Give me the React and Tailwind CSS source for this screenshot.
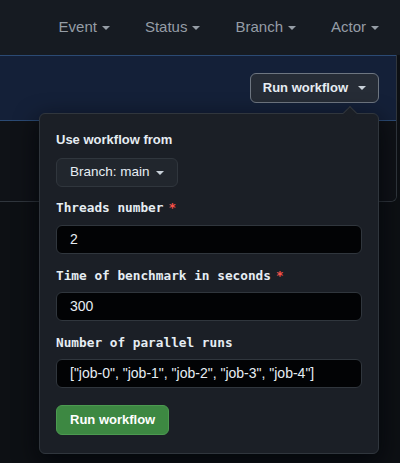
import React from 'react';

const Caret = ({ className = '' }) => (
  <svg width="8" height="4" viewBox="0 0 8 4" className={className} fill="currentColor">
    <path d="M0 0h8L4 4z" />
  </svg>
);

const filters = ['Event', 'Status', 'Branch', 'Actor'];

const fields = [
  { label: 'Threads number', required: true, value: '2' },
  { label: 'Time of benchmark in seconds', required: true, value: '300' },
  { label: 'Number of parallel runs', required: false, value: '["job-0", "job-1", "job-2", "job-3", "job-4"]' },
];

const App = () => {
  return (
    <div className="relative w-[400px] h-[463px] overflow-hidden bg-[#0d1014] font-['Liberation_Sans',Arial,sans-serif]">
      {/* filter bar */}
      <div className="h-[55px] bg-[#161b22] flex items-center justify-end gap-[35px] pr-[21px] text-[15px] text-[#959da6]">
        {filters.map((f) => (
          <div key={f} className="flex items-center gap-[5px]">
            <span>{f}</span>
            <Caret />
          </div>
        ))}
      </div>

      {/* workflow box */}
      <div className="mr-[3px] border-r border-b border-[#30363d] rounded-br-md overflow-hidden">
        <div className="h-[66px] bg-[#142038] border-t border-b border-[#2b4a74] flex items-center justify-end pr-[17px]">
          <button className="h-[30px] px-[12px] flex items-center gap-[10px] rounded-md bg-[#262c36] border border-[#6e7681] text-[13px] font-bold text-[#e6edf3]">
            Run workflow
            <Caret className="text-[#c9d1d9]" />
          </button>
        </div>
        <div className="h-[80px] bg-[#0f1217]" />
      </div>

      {/* dropdown */}
      <div className="absolute left-[39px] top-[113px] w-[340px] h-[341px] rounded-md border border-[#30363d] bg-[#1b1f26] p-4 shadow-[0_8px_24px_rgba(1,4,9,0.8)]">
        <div className="absolute -top-[6px] left-[305px] w-[10px] h-[10px] rotate-45 bg-[#1b1f26] border-l border-t border-[#30363d]" />
        <div className="text-[13px] leading-5 font-bold text-[#e6edf3]">Use workflow from</div>
        <button className="mt-[8px] h-[29px] px-[13px] flex items-center gap-[6px] rounded-md bg-[#21262d] border border-[#30363d] text-[13.5px] text-[#e6edf3]">
          Branch: main
          <Caret className="text-[#c9d1d9]" />
        </button>

        {fields.map((f, i) => (
          <div key={f.label} className={i === 0 ? 'mt-[11px]' : 'mt-[12px]'}>
            <div className="flex items-center gap-[5px] leading-5 text-[12.75px] font-bold text-[#e6edf3] font-['DejaVu_Sans_Mono',monospace]">
              <span>{f.label}</span>
              {f.required && <span className="text-[#f85149]">*</span>}
            </div>
            <div className={`${i === 0 ? 'mt-[7px]' : 'mt-[6px]'} h-[29px] px-[13px] flex items-center rounded-md bg-[#020305] border border-[#30363d] text-[14px] text-[#e6edf3]`}>
              {f.value}
            </div>
          </div>
        ))}

        <button className="mt-[17px] h-[30px] px-[13px] flex items-center rounded-md bg-[#3d8842] border border-[#4c9a50] text-[13px] font-bold text-white">
          Run workflow
        </button>
      </div>
    </div>
  );
};

export default App;
